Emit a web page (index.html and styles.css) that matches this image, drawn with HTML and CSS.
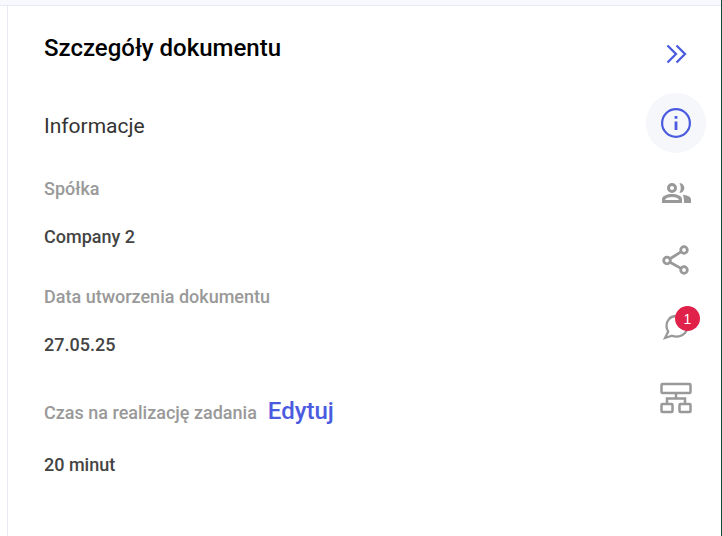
FILE: index.html
```html
<!DOCTYPE html>
<html lang="pl">
<head>
<meta charset="utf-8">
<title>Szczegóły dokumentu</title>
<link rel="stylesheet" href="styles.css">
</head>
<body>
<div class="page">
  <div class="topband"></div>
  <div class="shell">
    <div class="gutter"></div>
    <main class="panel">
      <section class="content">
        <h1 class="title">Szczegóły dokumentu</h1>
        <h2 class="subtitle">Informacje</h2>
        <div class="label l1">Spółka</div>
        <div class="value v1">Company 2</div>
        <div class="label l2">Data utworzenia dokumentu</div>
        <div class="value v2">27.05.25</div>
        <div class="label-row"><span class="label">Czas na realizację zadania</span><a class="edit">Edytuj</a></div>
        <div class="value v3">20 minut</div>
      </section>
      <nav class="rail">
        <button class="tool t-collapse">
          <svg width="22" height="20" viewBox="0 0 22 20" fill="none" stroke="#4a5be0" stroke-width="2.300"><path d="M2.500 1.500l8.500 8.500-8.500 8.500M11.500 1.500L20 10l-8.500 8.500"/></svg>
        </button>
        <button class="tool t-info active">
          <svg width="30" height="30" viewBox="0 0 30 30" fill="none" stroke="#4a5be0" stroke-width="2.200"><circle cx="15" cy="15" r="13.900"/><path d="M15 13.500v8.500M15 8v2.800" stroke-width="2.800"/></svg>
        </button>
        <button class="tool t-people">
          <svg width="30" height="20" viewBox="0 0 30 20" fill="#999"><path fill-rule="evenodd" d="M11 0a5 5 0 1 1 0 10 5 5 0 0 1 0-10zm0 3a2 2 0 1 0 0 4 2 2 0 0 0 0-4z"/><path d="M18.500 0c6.500.4 6.500 9.600 0 10 1.700-3 1.700-7 0-10z"/><path fill-rule="evenodd" d="M1 20v-4C1 13 6 11 11 11s10 2 10 5v4zm3-3h14c-.5-1.800-3.400-3-7-3S4.500 15.200 4 17z"/><path d="M22 11.800c4 .5 8 1.900 8 4.700V20h-7c0-3-.2-5.500-1-8.200z"/></svg>
        </button>
        <button class="tool t-share">
          <svg width="28" height="30" viewBox="0 0 28 30" fill="none" stroke="#999" stroke-width="2.800"><circle cx="22" cy="5" r="3.300"/><circle cx="5" cy="15.500" r="3.300"/><circle cx="22" cy="25" r="3.300"/><path d="M8 13.700l11-6.800M8 17.200l11 6.200"/></svg>
        </button>
        <button class="tool t-chat">
          <svg width="26" height="26" viewBox="0 0 26 26" fill="none" stroke="#999" stroke-width="2.300"><path d="M13.500 2C7 2 3.500 6.500 3.500 12c0 2.300.6 4 1.700 5.500L2 24l7-2.300c1.400.6 2.800.9 4.500.9C20 22.600 24.500 18 24.500 12S20 2 13.500 2z"/></svg>
          <span class="badge">1</span>
        </button>
        <button class="tool t-tree">
          <svg width="32" height="32" viewBox="0 0 32 32" fill="none" stroke="#999" stroke-width="2.500"><rect x="1.500" y="2" width="29" height="9" rx="1"/><rect x="1.500" y="22" width="11" height="8" rx="1"/><rect x="19.500" y="22" width="11" height="8" rx="1"/><path d="M16 11v5.500M7 22v-5.500h18V22"/></svg>
        </button>
      </nav>
    </main>
  </div>
</div>
</body>
</html>
```
FILE: styles.css
```css
* { box-sizing: border-box; }
html, body { margin: 0; padding: 0; }
body { font-family: Roboto, sans-serif; background: #fff; }
.page { width: 722px; height: 536px; display: flex; flex-direction: column; overflow: hidden; border-right: 1px solid #0f4c3a; }
.topband { height: 6px; flex: none; background: #f8f8ff; border-bottom: 1px solid #e8e8f6; }
.shell { flex: 1; display: flex; min-height: 0; }
.gutter { width: 8px; flex: none; background: #fff; border-right: 1px solid #e8e8f6; }
.panel { flex: 1; display: flex; justify-content: space-between; background: #fff; }
.content { padding: 28px 0 0 36px; }
.title { margin: 0; font-size: 24px; line-height: 28px; font-weight: 500; color: #000; }
.subtitle { margin: 50px 0 0; font-size: 21px; line-height: 28px; font-weight: 400; color: #333; }
.label { font-size: 18px; line-height: 24px; font-weight: 500; color: #999; }
.value { font-size: 18px; line-height: 24px; font-weight: 500; color: #444; }
.l1 { margin-top: 37px; }
.v1 { margin-top: 24px; }
.l2 { margin-top: 36px; }
.v2 { margin-top: 24px; }
.label-row { margin-top: 40px; display: flex; align-items: baseline; gap: 11px; height: 30px; }
.edit { font-size: 24px; line-height: 28px; font-weight: 500; color: #4a5be0; }
.v3 { margin-top: 26px; }
.rail { width: 90px; padding-top: 28px; display: flex; flex-direction: column; align-items: center; }
.tool { position: relative; width: 60px; height: 40px; padding: 0; border: 0; background: none; border-radius: 50%; display: flex; align-items: center; justify-content: center; flex: none; }
.t-info { height: 60px; margin-top: 19px; }
.active { background: #f6f7fb; }
.t-people { margin-top: 20px; }
.t-share { margin-top: 27px; }
.t-chat { margin-top: 27px; }
.t-tree { margin-top: 31px; }
.badge { position: absolute; left: 29px; top: -1px; width: 25px; height: 25px; border-radius: 50%; background: #e0214a; color: #fff; font-size: 14px; font-weight: 500; display: flex; align-items: center; justify-content: center; }
```
